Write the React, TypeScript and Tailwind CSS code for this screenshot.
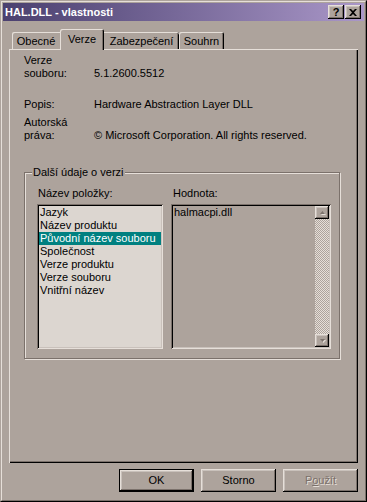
const raised =
  "shadow-[inset_-1px_-1px_#000,inset_1px_1px_#e6dfd9,inset_-2px_-2px_#7b716b,inset_2px_2px_#c9c1bb]"
const sunken =
  "shadow-[inset_1px_1px_#7b716b,inset_-1px_-1px_#e6dfd9,inset_2px_2px_#000,inset_-2px_-2px_#c9c1bb]"

const items = [
  "Jazyk",
  "Název produktu",
  "Původní název souboru",
  "Společnost",
  "Verze produktu",
  "Verze souboru",
  "Vnitřní název",
]

function CloseGlyph() {
  return (
    <svg width="8" height="7" viewBox="0 0 8 7">
      <path d="M0 0h2l2 2 2-2h2L5 3.5 8 7H6L4 5 2 7H0l3-3.5z" fill="#000" />
    </svg>
  )
}

function Arrow({ down }: { down?: boolean }) {
  return (
    <svg width="7" height="5" viewBox="0 0 7 5">
      {down ? (
        <>
          <path d="M1 1h5L3.5 4z" fill="#e6dfd9" transform="translate(1 1)" />
          <path d="M1 1h5L3.5 4z" fill="#7b716b" />
        </>
      ) : (
        <>
          <path d="M1 4h5L3.5 1z" fill="#e6dfd9" transform="translate(1 1)" />
          <path d="M1 4h5L3.5 1z" fill="#7b716b" />
        </>
      )}
    </svg>
  )
}

function Button({ label, isDefault, disabled }: { label: React.ReactNode; isDefault?: boolean; disabled?: boolean }) {
  return (
    <div
      className={
        "w-[75px] h-[23px] flex items-center justify-center " +
        raised +
        (isDefault ? " border border-black" : "") +
        (disabled ? " text-[#7b716b] [text-shadow:1px_1px_0_#e6dfd9]" : " text-black")
      }
    >
      {label}
    </div>
  )
}

export default function App() {
  return (
    <div
      className="w-[367px] h-[502px] bg-[#ada39c] border border-t-[#ada39c] border-l-[#ada39c] border-r-black border-b-black text-[11px] leading-[13px] text-black"
      style={{ fontFamily: '"Liberation Sans", Arial, sans-serif' }}
    >
      <div className="h-full border border-t-[#e6dfd9] border-l-[#e6dfd9] border-r-[#7b716b] border-b-[#7b716b] p-[1px] flex flex-col">
        {/* title bar */}
        <div className="h-[18px] bg-gradient-to-r from-[#4b406f] to-[#aa97c8] flex items-center pl-[2px] pr-[3px]">
          <span className="text-white font-bold text-[11px] flex-1">HAL.DLL - vlastnosti</span>
          <div className="flex gap-[1px]">
            <div className={"w-[16px] h-[14px] bg-[#ada39c] flex items-center justify-center font-bold text-[11px] leading-none " + raised}>
              ?
            </div>
            <div className={"w-[16px] h-[14px] bg-[#ada39c] flex items-center justify-center " + raised}>
              <CloseGlyph />
            </div>
          </div>
        </div>

        <div className="px-[6px] pt-[8px] flex flex-col">
          {/* tabs */}
          <div className="flex h-[20px] pl-[3px] items-start">
            <div className="mt-[3px] h-[17px] w-[48px] rounded-tl-[2px] shadow-[inset_1px_1px_#e6dfd9] flex items-center justify-center pt-[2px]">
              Obecné
            </div>
            <div className="relative z-10 h-[21px] w-[44px] bg-[#ada39c] rounded-t-[2px] shadow-[inset_1px_1px_#e6dfd9,inset_-1px_0_#000,inset_-2px_0_#7b716b] flex justify-center pt-[4px]">
              Verze
            </div>
            <div className="mt-[3px] h-[17px] w-[75px] rounded-tr-[2px] shadow-[inset_0_1px_#e6dfd9,inset_-1px_0_#000,inset_-2px_0_#7b716b] flex items-center justify-center pt-[2px]">
              Zabezpečení
            </div>
            <div className="mt-[3px] h-[17px] w-[45px] rounded-t-[2px] shadow-[inset_1px_1px_#e6dfd9,inset_-1px_0_#000,inset_-2px_0_#7b716b] flex items-center justify-center pt-[2px]">
              Souhrn
            </div>
          </div>

          {/* panel */}
          <div className="h-[414px] shadow-[inset_1px_1px_#e6dfd9,inset_-1px_-1px_#000,inset_-2px_-2px_#7b716b] pt-[5px] pl-[15px] flex flex-col">
            <div className="grid grid-cols-[70px_1fr] gap-y-[5px]">
              <div>
                Verze
                <br />
                souboru:
              </div>
              <div className="self-end">5.1.2600.5512</div>

              <div className="mt-[13px]">Popis:</div>
              <div className="mt-[13px]">Hardware Abstraction Layer DLL</div>

              <div>
                Autorská
                <br />
                práva:
              </div>
              <div className="self-end">© Microsoft Corporation. All rights reserved.</div>
            </div>

            {/* group box */}
            <div className="relative mt-[30px] w-[316px] border border-[#7b716b] shadow-[inset_1px_1px_#e6dfd9,1px_1px_#e6dfd9] pt-[14px] pl-[12px] pb-[9px]">
              <span className="absolute -top-[7px] left-[7px] px-[1px] bg-[#ada39c]">Další údaje o verzi</span>
              <div className="flex gap-[8px]">
                <div className="flex flex-col">
                  <div className="pl-[1px] h-[13px]">Název položky:</div>
                  <div className={"mt-[4px] w-[126px] h-[145px] bg-[#dcd6d0] p-[2px] " + sunken}>
                    {items.map((it, i) => (
                      <div
                        key={it}
                        className={"h-[13px] pl-[1px] whitespace-nowrap " + (i === 2 ? "bg-[#008080] text-white" : "")}
                      >
                        {it}
                      </div>
                    ))}
                  </div>
                </div>
                <div className="flex flex-col">
                  <div className="pl-[2px] h-[13px]">Hodnota:</div>
                  <div className={"mt-[4px] w-[160px] h-[145px] bg-[#ada39c] p-[2px] flex " + sunken}>
                    <div className="flex-1 pl-[1px]">halmacpi.dll</div>
                    <div className="w-[14px] flex flex-col">
                      <div className={"h-[13px] bg-[#ada39c] flex items-center justify-center " + raised}>
                        <Arrow />
                      </div>
                      <div className="flex-1 bg-[image:repeating-conic-gradient(#e6dfd9_0_25%,#ada39c_0_50%)] bg-[length:2px_2px]" />
                      <div className={"h-[13px] bg-[#ada39c] flex items-center justify-center " + raised}>
                        <Arrow down />
                      </div>
                    </div>
                  </div>
                </div>
              </div>
            </div>
          </div>

          {/* buttons */}
          <div className="mt-[6px] flex justify-end gap-[7px]">
            <Button label="OK" isDefault />
            <Button label="Storno" />
            <Button
              disabled
              label={
                <span>
                  P<span className="underline">o</span>užít
                </span>
              }
            />
          </div>
        </div>
      </div>
    </div>
  )
}
